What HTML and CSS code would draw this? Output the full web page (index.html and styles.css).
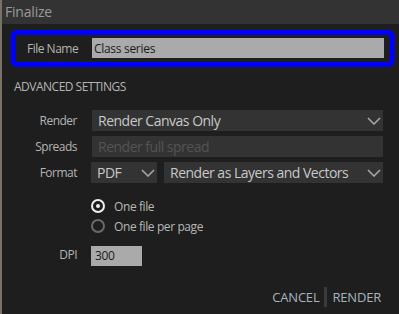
FILE: index.html
```html
<!DOCTYPE html>
<html lang="en">
<head>
  <meta charset="UTF-8" />
  <title>Finalize</title>
  <link rel="stylesheet" href="styles.css">
</head>
<body>
  <div class="titlebar">Finalize</div>

  <div class="filename-box">
    <label class="label">File Name</label>
    <input class="text-input" type="text" value="Class series">
  </div>

  <div class="section-title">ADVANCED SETTINGS</div>

  <div class="form">
    <label class="label">Render</label>
    <div class="select">
      <span>Render Canvas Only</span>
      <svg class="chevron" width="14" height="8" viewBox="0 0 14 8"><path d="M1 1 L7 7 L13 1" fill="none" stroke="#a6a6a6" stroke-width="1.6"/></svg>
    </div>

    <label class="label">Spreads</label>
    <div class="select disabled">
      <span>Render full spread</span>
    </div>

    <label class="label">Format</label>
    <div class="select-pair">
      <div class="select small">
        <span>PDF</span>
        <svg class="chevron" width="14" height="8" viewBox="0 0 14 8"><path d="M1 1 L7 7 L13 1" fill="none" stroke="#a6a6a6" stroke-width="1.6"/></svg>
      </div>
      <div class="select">
        <span>Render as Layers and Vectors</span>
        <svg class="chevron" width="14" height="8" viewBox="0 0 14 8"><path d="M1 1 L7 7 L13 1" fill="none" stroke="#a6a6a6" stroke-width="1.6"/></svg>
      </div>
    </div>

    <span></span>
    <div class="radios">
      <div class="radio checked"><span class="circle"></span>One file</div>
      <div class="radio"><span class="circle"></span>One file per page</div>
    </div>

    <label class="label dpi-label">DPI</label>
    <div class="dpi-row">
      <input class="text-input dpi" type="text" value="300">
    </div>
  </div>

  <div class="actions">
    <button class="action-btn">CANCEL</button>
    <span class="separator"></span>
    <button class="action-btn">RENDER</button>
  </div>
</body>
</html>
```

FILE: styles.css
```css
body {
  margin: 0;
  width: 399px;
  height: 314px;
  box-sizing: border-box;
  background-color: #1e1e1e;
  border-left: 2px solid #7a7064;
  font-family: "Open Sans", "Noto Sans", sans-serif;
  color: #b4b4b4;
  overflow: hidden;
  position: relative;
}
body::after {
  content: "";
  position: absolute;
  left: -2px;
  top: 300px;
  width: 2px;
  height: 14px;
  background-color: #e8b830;
}
.titlebar {
  height: 24px;
  line-height: 23px;
  background-color: #333333;
  color: #9a9a9a;
  font-size: 14px;
  letter-spacing: -0.2px;
  padding-left: 3px;
}
.filename-box {
  margin: 6px 0 0 9px;
  width: 384px;
  box-sizing: border-box;
  border: 5px solid #0000ff;
  border-radius: 6px;
  padding: 3px 6px 4px 11px;
  display: flex;
  align-items: center;
}
.filename-box .label {
  flex: 0 0 65px;
  text-align: left;
}
.label {
  font-size: 12px;
  letter-spacing: -0.5px;
  color: #b4b4b4;
  text-align: right;
}
.text-input {
  flex: 1;
  height: 20px;
  box-sizing: border-box;
  border: none;
  outline: none;
  background-color: #aaaaaa;
  color: #1a1a1a;
  font-family: "Open Sans", "Noto Sans", sans-serif;
  font-size: 12px;
  letter-spacing: -0.3px;
  padding: 0 2px;
}
.section-title {
  margin: 12px 0 0 12px;
  font-size: 12px;
  letter-spacing: -0.5px;
  color: #b4b4b4;
  line-height: 16px;
}
.form {
  display: grid;
  grid-template-columns: 75px 1fr;
  column-gap: 15px;
  row-gap: 5px;
  margin-top: 15px;
  padding-right: 16px;
  align-items: center;
}
.select {
  flex: 1;
  height: 21px;
  background-color: #333333;
  display: flex;
  align-items: center;
  justify-content: space-between;
  padding: 0 2px 0 6px;
  font-size: 14px;
  letter-spacing: -0.5px;
  color: #c8c8c8;
  white-space: nowrap;
}
.select.disabled {
  color: #545454;
}
.select-pair {
  display: flex;
  gap: 7px;
  margin-left: -1px;
}
.select-pair .select.small {
  flex: 0 0 66px;
  box-sizing: border-box;
}
.radios {
  display: flex;
  flex-direction: column;
  gap: 6px;
  margin-top: 11px;
  margin-left: -1px;
}
.radio {
  display: flex;
  align-items: center;
  gap: 9px;
  font-size: 12px;
  letter-spacing: -0.4px;
  color: #b8b8b8;
  height: 14px;
}
.circle {
  width: 14px;
  height: 14px;
  box-sizing: border-box;
  border: 2px solid #6a6a6a;
  border-radius: 50%;
  position: relative;
}
.radio.checked .circle {
  border-color: #f0f0f0;
}
.radio.checked .circle::after {
  content: "";
  position: absolute;
  left: 3px;
  top: 3px;
  width: 4px;
  height: 4px;
  border-radius: 50%;
  background-color: #f0f0f0;
}
.dpi-label {
  margin-top: 5px;
}
.dpi-row {
  margin-top: 5px;
  margin-left: -1px;
}
.text-input.dpi {
  width: 51px;
  padding-left: 4px;
}
.actions {
  position: absolute;
  right: 18px;
  top: 287px;
  display: flex;
  align-items: center;
  gap: 5px;
}
.action-btn {
  background: none;
  border: none;
  padding: 0;
  font-family: "Open Sans", "Noto Sans", sans-serif;
  font-size: 13px;
  letter-spacing: -0.2px;
  color: #a7b3bf;
  cursor: pointer;
}
.separator {
  width: 3px;
  height: 20px;
  background-color: #3a3a3a;
}
```
